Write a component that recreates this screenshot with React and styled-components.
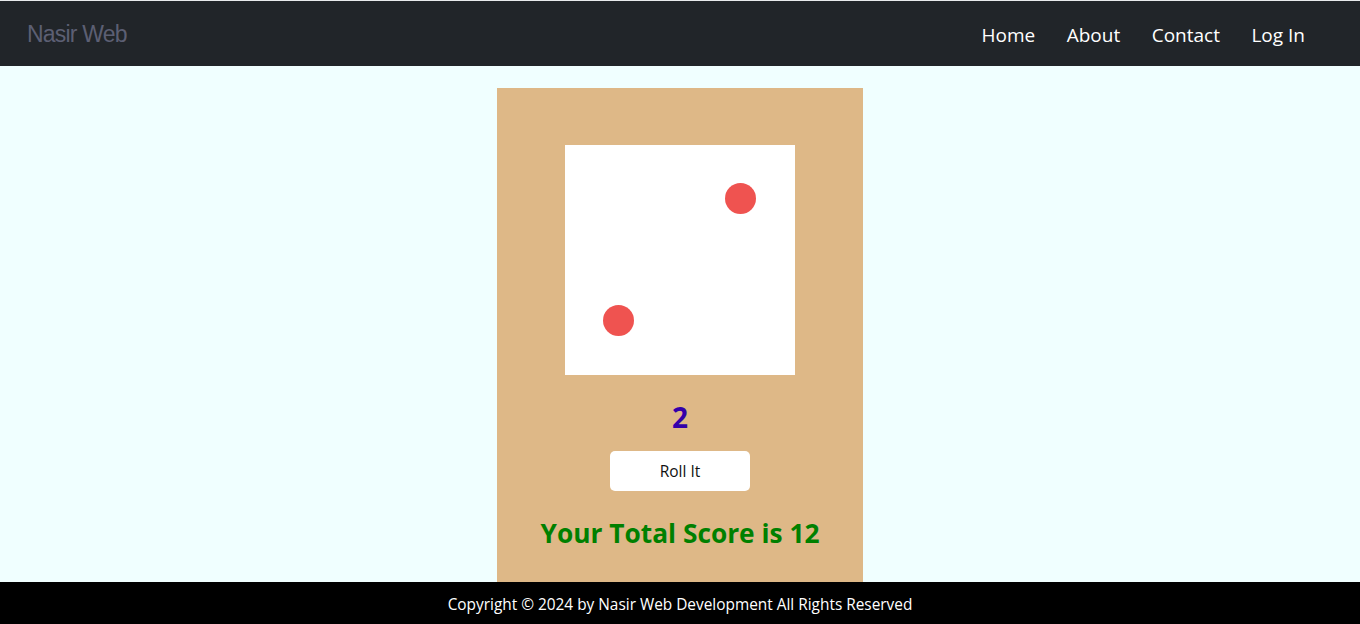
import React from "react";
import styled, { createGlobalStyle } from "styled-components";

const Global = createGlobalStyle`
  html, body { margin: 0; padding: 0; }
  body {
    background: #f0ffff;
    font-family: "Open Sans", "Noto Sans", sans-serif;
    height: 624px;
    overflow: hidden;
  }
  #root { height: 624px; }
`;

const Page = styled.div`
  display: flex;
  flex-direction: column;
  height: 624px;
`;

const Nav = styled.nav`
  background: #212529;
  border-top: 1px solid #e8eaec;
  height: 65px;
  box-sizing: border-box;
  height: 66px;
  display: flex;
  align-items: center;
  justify-content: space-between;
  padding: 2px 55px 0 27px;
  flex-shrink: 0;
`;

const Brand = styled.a`
  font-family: "Liberation Sans", Arial, sans-serif;
  font-size: 23px;
  color: #5c5f73;
  text-decoration: none;
  letter-spacing: -0.8px;
`;

const Links = styled.ul`
  display: flex;
  list-style: none;
  margin: 0;
  padding: 0;
  gap: 31.5px;
`;

const NavLink = styled.a`
  color: #fff;
  font-size: 19px;
  text-decoration: none;
`;

const Main = styled.main`
  flex: 1;
  display: flex;
  justify-content: center;
  padding-top: 22px;
  overflow: hidden;
`;

const Card = styled.section`
  width: 366px;
  background: #deb887;
  display: flex;
  flex-direction: column;
  align-items: center;
  padding-top: 57px;
`;

const Die = styled.div`
  width: 230px;
  height: 230px;
  background: #fff;
  position: relative;
`;

const Dot = styled.span`
  position: absolute;
  width: 31px;
  height: 31px;
  border-radius: 50%;
  background: #ef5350;
  left: ${(p) => p.$x}px;
  top: ${(p) => p.$y}px;
`;

const Value = styled.h2`
  margin: 24px 0 0;
  font-size: 28px;
  font-weight: 700;
  line-height: 36px;
  color: #3300aa;
`;

const RollButton = styled.button`
  margin-top: 16px;
  width: 140px;
  height: 40px;
  border: none;
  border-radius: 5px;
  background: #fff;
  font-family: "Open Sans", "Noto Sans", sans-serif;
  font-size: 15.5px;
  color: #111;
  cursor: pointer;
`;

const Score = styled.h1`
  margin: 23px 0 0;
  font-size: 26.3px;
  font-weight: 700;
  line-height: 38px;
  color: #008000;
`;

const Footer = styled.footer`
  background: #000;
  color: #fff;
  height: 42px;
  box-sizing: border-box;
  padding-top: 2px;
  display: flex;
  align-items: center;
  justify-content: center;
  font-size: 15.4px;
  flex-shrink: 0;
`;

export default function App() {
  return (
    <>
      <Global />
      <Page>
        <Nav>
          <Brand href="#">Nasir Web</Brand>
          <Links>
            <li><NavLink href="#">Home</NavLink></li>
            <li><NavLink href="#">About</NavLink></li>
            <li><NavLink href="#">Contact</NavLink></li>
            <li><NavLink href="#">Log In</NavLink></li>
          </Links>
        </Nav>
        <Main>
          <Card>
            <Die>
              <Dot $x={160} $y={38} />
              <Dot $x={38} $y={160} />
            </Die>
            <Value>2</Value>
            <RollButton>Roll It</RollButton>
            <Score>Your Total Score is 12</Score>
          </Card>
        </Main>
        <Footer>Copyright © 2024 by Nasir Web Development All Rights Reserved</Footer>
      </Page>
    </>
  );
}
